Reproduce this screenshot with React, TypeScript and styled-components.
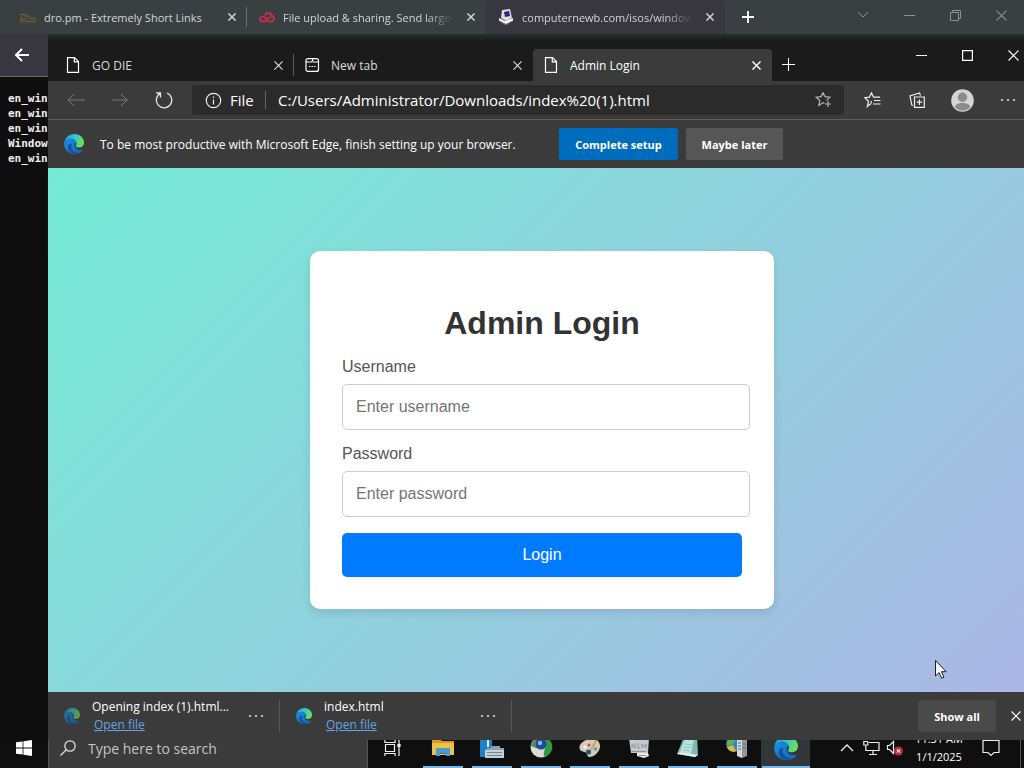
import React from "react";
import styled, { createGlobalStyle, css } from "styled-components";

const ui = `"Open Sans", "Noto Sans", sans-serif`;

const Global = createGlobalStyle`
  * { box-sizing: border-box; }
  html, body { margin: 0; background: #0d0d0d; }
  body { font-family: ${ui}; font-size: 12px; color: #fff; overflow: hidden; }
  button, input { font: inherit; color: inherit; }
  button { border: 0; background: none; padding: 0; }
  svg { display: block; flex: none; }
`;

const Desktop = styled.div`
  min-height: 100vh;
  display: flex;
  flex-direction: column;
  overflow: hidden;
`;

const OuterStrip = styled.header`
  height: 34px;
  padding-left: 8px;
  display: flex;
  background: #3a4042;
  font-size: 11px;
`;

const Title = styled.span<{ $fade?: boolean }>`
  flex: 1;
  min-width: 0;
  overflow: hidden;
  white-space: nowrap;
  ${(p) => p.$fade && css`mask-image: linear-gradient(90deg, #000 84%, transparent);`}
`;

const OuterTab = styled.div<{ $active?: boolean; $line?: boolean }>`
  width: 239px;
  padding: 0 11px 0 12px;
  display: flex;
  align-items: center;
  gap: 8px;
  color: #d3d5d6;
  background: ${(p) => (p.$active ? "#38363f" : "transparent")};
  border-radius: 6px 6px 0 0;
  ${(p) => p.$line && css`
    background: linear-gradient(#6b7072, #6b7072) right center / 1px 20px no-repeat;
  `}
  ${Title} { margin-right: 6px; }
`;

const IconButton = styled.button<{ $w: number; $h: number }>`
  width: ${(p) => p.$w}px;
  height: ${(p) => p.$h}px;
  flex: none;
  display: flex;
  align-items: center;
  justify-content: center;
`;

const Controls = styled.div<{ $dim?: boolean }>`
  margin-left: auto;
  display: flex;
  color: ${(p) => (p.$dim ? "#8d9294" : "#fff")};
`;

const Middle = styled.div`
  flex: 1;
  display: grid;
  grid-template-columns: 48px minmax(0, 1fr);
`;

const Behind = styled.aside`
  overflow: hidden;
  background: #0e0e0e;
`;

const BackBar = styled.div`
  height: 43px;
  padding-left: 10px;
  display: flex;
  align-items: center;
  background: #38363f;
  border-bottom: 1px solid #6b6a70;
`;

const Listing = styled.pre`
  margin: 14px 0 0 8px;
  font: bold 11px/15px "DejaVu Sans Mono", monospace;
  color: #eee;
`;

const Window = styled.main`
  margin-right: -12px;
  display: flex;
  flex-direction: column;
  background: #3b3b3b;
`;

const TabStrip = styled.div`
  height: 47px;
  padding-left: 7px;
  display: flex;
  align-items: flex-end;
  background: linear-gradient(#2b2e2e, #1b1b1b 7px);
  ${Controls} { align-self: flex-start; margin-top: 5px; }
`;

const EdgeTab = styled.div<{ $active?: boolean; $line?: boolean }>`
  width: 239px;
  height: 32px;
  padding: 0 11px 0 10px;
  display: flex;
  align-items: center;
  gap: 11px;
  color: ${(p) => (p.$active ? "#fff" : "#dcdcdc")};
  background: ${(p) => (p.$active ? "#3b3b3b" : "transparent")};
  border-radius: 4px 4px 0 0;
  ${(p) => p.$line && css`
    background: linear-gradient(#5a5a5a, #5a5a5a) right center / 1px 22px no-repeat;
  `}
`;

const Toolbar = styled.div`
  height: 39px;
  padding: 0 6px;
  display: flex;
  align-items: center;
  border-bottom: 1px solid #5f5f5f;
`;

const Address = styled.div`
  flex: 1;
  height: 30px;
  margin: 0 6px;
  padding: 0 12px 0 13px;
  display: flex;
  align-items: center;
  background: #2b2b2b;
  border-radius: 4px;
  font-size: 15px;
  input {
    flex: 1;
    min-width: 0;
    height: 24px;
    border: 0;
    padding: 0;
    outline: 0;
    background: none;
  }
`;

const FileTag = styled.span`
  width: 36px;
  margin: 0 12px 0 8px;
  border-right: 1px solid #666;
  line-height: 18px;
`;

const InfoBar = styled.div`
  height: 48px;
  padding-left: 16px;
  display: flex;
  align-items: center;
`;

const Message = styled.p`
  min-width: 427px;
  margin: 0 32px 0 16px;
  white-space: nowrap;
`;

const PushButton = styled.button<{ $primary?: boolean; $w: number }>`
  width: ${(p) => p.$w}px;
  height: 32px;
  margin-right: 8px;
  border-radius: 2px;
  background: ${(p) => (p.$primary ? "#006cbe" : "#565656")};
  font-size: 11px;
  font-weight: 700;
`;

const Page = styled.section`
  flex: 1;
  position: relative;
  display: flex;
  align-items: center;
  justify-content: center;
  background: linear-gradient(135deg, #74ebd5, #acb6e5);
  font-family: "Liberation Sans", Arial, sans-serif;
  font-size: 16px;
`;

const Card = styled.form`
  width: 464px;
  padding: 32px;
  background: #fff;
  border-radius: 10px;
  box-shadow: 0 4px 8px rgba(0, 0, 0, 0.1);
`;

const Heading = styled.h1`
  margin: 22px 0 15px;
  font-size: 32px;
  line-height: 37px;
  text-align: center;
  color: #333;
`;

const Field = styled.div`
  margin-bottom: 14px;
  label {
    display: block;
    margin-bottom: 8px;
    line-height: 19px;
    color: #555;
  }
  input {
    display: block;
    width: calc(100% + 8px);
    height: 46px;
    padding: 0 13px;
    border: 1px solid #ccc;
    border-radius: 5px;
    background: #fff;
    color: #333;
  }
  input::placeholder { color: #757575; }
`;

const LoginButton = styled.button`
  width: 100%;
  height: 44px;
  margin-top: 2px;
  border-radius: 5px;
  background: #007bff;
`;

const Pointer = styled.svg`
  position: absolute;
  right: 88px;
  bottom: 11px;
`;

const Downloads = styled.div`
  height: 48px;
  padding-right: 10px;
  display: flex;
  align-items: center;
  ${PushButton} { margin: 0 10px 0 auto; background: #4a4a4a; }
`;

const Download = styled.div`
  width: 232px;
  height: 32px;
  padding: 0 12px 0 16px;
  display: flex;
  align-items: center;
  gap: 12px;
  border-right: 1px solid #5b5b5b;
  div { flex: 1; line-height: 18px; white-space: nowrap; }
  a { display: block; padding-left: 2px; color: #63a5e8; }
`;

const Taskbar = styled.footer`
  height: 28px;
  overflow: hidden;
  display: flex;
  align-items: flex-end;
  background: #0f0f0f;
`;

const SearchBox = styled.label`
  width: 320px;
  height: 40px;
  padding: 0 0 0 11px;
  display: flex;
  align-items: center;
  gap: 12px;
  background: #3b3b3b;
  border: 1px solid #555;
  border-width: 0 1px;
  input {
    flex: 1;
    min-width: 0;
    border: 0;
    padding: 0;
    outline: 0;
    background: none;
    font-size: 14px;
  }
  input::placeholder { color: #c4c4c4; }
`;

const Apps = styled.div`
  display: flex;
  padding-left: 2px;
`;

const AppButton = styled(IconButton)<{ $active?: boolean }>`
  background: linear-gradient(#76b9ed, #76b9ed) center bottom / ${(p) => (p.$active ? 48 : 40)}px 2px no-repeat
    ${(p) => (p.$active ? "#333638" : "transparent")};
`;

const Tray = styled.div`
  height: 40px;
  margin-left: auto;
  padding-right: 3px;
  display: flex;
  align-items: center;
`;

const Clock = styled.time`
  width: 64px;
  text-align: center;
  font-size: 11px;
  line-height: 18px;
`;

const ShowDesktop = styled.i`
  width: 1px;
  height: 40px;
  margin-left: 9px;
  background: #555;
`;

const X = ({ s = 9, w = 1.3 }: { s?: number; w?: number }) => (
  <svg width={s} height={s} viewBox="0 0 10 10" stroke="currentColor" strokeWidth={w} fill="none">
    <path d="M.5.5l9 9M9.5.5l-9 9" />
  </svg>
);

const Plus = ({ s, w }: { s: number; w: number }) => (
  <svg width={s} height={s} viewBox="0 0 12 12" stroke="currentColor" strokeWidth={w}>
    <path d="M6 0v12M0 6h12" />
  </svg>
);

const Minus = () => (
  <svg width="11" height="11" stroke="currentColor"><path d="M0 5.5h11" /></svg>
);

const Doc = () => (
  <svg width="16" height="16" viewBox="0 0 16 16" stroke="#fff" strokeWidth="1.2" fill="none">
    <path d="M2.5.6h7l4 4v10.8h-11zM9.3.8v4h4" />
  </svg>
);

const Dots = () => (
  <svg width="16" height="4" fill="#d8d8d8">
    <circle cx="2" cy="2" r="1.1" /><circle cx="8" cy="2" r="1.1" /><circle cx="14" cy="2" r="1.1" />
  </svg>
);

const EdgeLogo = ({ s, id, dim }: { s: number; id: string; dim?: boolean }) => (
  <svg width={s} height={s} viewBox="0 0 20 20" opacity={dim ? 0.6 : 1}>
    <defs>
      <linearGradient id={id + "a"} x1="0" y1="0" x2="1" y2="0.3">
        <stop offset="0" stopColor="#1b9fe0" /><stop offset=".55" stopColor="#35c5d0" /><stop offset="1" stopColor="#66e05a" />
      </linearGradient>
      <linearGradient id={id + "b"} x1="0" y1="0" x2="1" y2="1">
        <stop offset="0" stopColor="#1a8fe6" /><stop offset="1" stopColor="#1263b8" />
      </linearGradient>
    </defs>
    <path fill={`url(#${id}a)`} d="M.3 9C1 3.700 5 0 10.200 0 16 0 20 4 20 8.600c0 3.200-2.400 5-5 5-2.200 0-3.400-.8-3.400-1.500 0-.5.900-.9.900-2.600C12.500 7 10 4.800 6.800 4.800 3.500 4.800 1.200 6.700.3 9z" />
    <path fill={`url(#${id}b)`} d="M.1 10C.1 7.200 3 4.900 6.600 4.900c3 0 5.200 1.500 5.800 3.500-1 .3-1.800 1.300-1.800 2.600 0 2.600 2 4.600 4.600 4.900 1.300.1 2.500-.1 3.300-.3.4-.2.700.1.400.5C17.100 18.900 14 20 10.600 20 4.500 20 .1 15.500.1 10z" />
    <path fill="#123f8c" opacity=".7" d="M7.800 10.200c-1.800 4 1.600 9 7.200 8.700-5.800 2.600-12.600-1.800-10.600-7.300.6-1.600 2-2.400 3.400-1.400z" />
  </svg>
);

const Start = () => (
  <svg width="16" height="16" fill="#fff">
    <path d="M0 2.300L6.600 1.400v6.200H0zM7.400 1.300L16 0v7.600H7.400zM0 8.400h6.600v6.200L0 13.700zM7.400 8.400H16V16l-8.600-1.200z" />
  </svg>
);

const Explorer = () => (
  <svg width="24" height="24">
    <path fill="#d99a1e" d="M1 3h8l2 2h12v5H1z" /><path fill="#f0c04a" d="M1 7h22v12H1z" />
    <path fill="#4b9bcb" d="M5 12h14v8h-4v-3.500H9V20H5z" /><path fill="#2f78a8" d="M9 16.500h6V18H9z" />
  </svg>
);

const ServerManager = () => (
  <svg width="26" height="26">
    <path fill="#1f7fc4" d="M1 1h12v21H1z" /><path fill="#d9ecf8" d="M8 3h2v9H8z" />
    <path fill="#8ea0ad" d="M8 13h4v-2h9v2h4v3H7z" /><path fill="#c3d0d8" d="M6 15h19v8H6z" />
    <path stroke="#74838e" d="M8 17.500h15M8 20.500h15" />
  </svg>
);

const Globe = () => (
  <svg width="24" height="24">
    <circle cx="12" cy="11" r="10.500" fill="#d9ddd2" />
    <path fill="#2f9a3b" d="M13 .5A10.500 10.500 0 0116 21c-3-2 0-6 0-11z" />
    <path fill="#5f8b69" d="M1.600 10A10.500 10.500 0 0112 .5v9l-4 3z" />
    <circle cx="12" cy="8" r="5.500" fill="#1f4a9c" /><circle cx="11" cy="7" r="2.200" fill="#8ab9ea" />
  </svg>
);

const Palette = () => (
  <svg width="24" height="24">
    <path fill="#d8cbb6" d="M13 3c5.500-.5 9.500 3 9 8-.5 5-6 10-10.500 10-2.500 0-2-3-4-4.500C5.500 15 2 16 1.500 12 1 7.500 7 3.500 13 3z" />
    <circle cx="10.500" cy="16" r="2.600" fill="#14588f" /><circle cx="7" cy="11" r="1.600" fill="#fff" />
    <circle cx="11" cy="9" r="1.500" fill="#a55" /><circle cx="17.500" cy="13" r="1.700" fill="#6b8ea0" />
    <path stroke="#c2a26b" strokeWidth="2" d="M20 1l-7 13" />
  </svg>
);

const Device = () => (
  <svg width="24" height="24">
    <path fill="#c5c9cb" d="M2 2h20l-1 15H4z" /><path fill="#eceeee" d="M10 17h11l1 3-5 2-7-2z" />
    <path stroke="#8b9296" fill="none" d="M5 12V8l3 4V7m3 0v5h2m2 0V8l2 3 2-3v4M4.500 15.500h15M12 19.500h7" />
  </svg>
);

const Notepad = () => (
  <svg width="24" height="24">
    <path fill="#7fb9b5" d="M8 1h13l1 18-3 2L1 18z" /><path fill="#b9e4dd" d="M9 3h9l-3 15-11-2z" />
    <path fill="#e5eeee" d="M1 18l18 3 3-2-18-3z" /><path stroke="#8ec4bf" d="M9 8l7 1M8 11l7 1M7 14l7 1" />
  </svg>
);

const Rack = () => (
  <svg width="24" height="24">
    <circle cx="9" cy="8" r="8" fill="#2e86c9" /><path fill="#5cb548" d="M3 3c4-3 8-2 9 0l-4 5-6 2z" />
    <path fill="#e1b93a" d="M2 11l6-2 3 6c-4 2-8-1-9-4z" />
    <path fill="#d3d7d9" d="M12 3l5-1v20l-5-2z" /><path fill="#8f979c" d="M17 2l5 2v16l-5 2z" />
    <path stroke="#5d666b" d="M13 7h3M13 10h3M13 13h3M18 8h3M18 12h3" />
  </svg>
);

export default function App() {
  return (
    <Desktop>
      <Global />
      <OuterStrip>
        <OuterTab $line>
          <svg width="16" height="16" stroke="#6d5334" strokeWidth="1.500" fill="none">
            <path d="M1 12.500h14V9.500H9V7H5V5H1.500zM1 5.500h3M2 10h5" />
          </svg>
          <Title>dro.pm - Extremely Short Links</Title>
          <X s={8} w={1.8} />
        </OuterTab>
        <OuterTab>
          <svg width="16" height="16" stroke="#c32f48" strokeWidth="2" fill="none">
            <path d="M8 11.500C6 13 1 13 1 9.800 1 7.500 3.500 6.800 5 8l4.500 4c2.500 1.500 5.500.4 5.500-2.500 0-2-1.500-3-2.500-3C12 3.500 7 3 6 6.500M8.500 9.500c1-1.500 3-1.500 3.500 0" />
          </svg>
          <Title $fade>File upload &amp; sharing. Send large</Title>
          <X s={8} w={1.8} />
        </OuterTab>
        <OuterTab $active>
          <svg width="16" height="16">
            <path fill="#ddd" d="M4 1l8-1 2 9-6 3-5-3z" /><path fill="#24238a" d="M6 3l5-1 1 5-5 1z" />
            <path fill="#f4f4f4" d="M1 9l6 3 8-3v3l-7 4-7-4z" /><path stroke="#555" fill="none" d="M1 12l7 3.500 7-3.500" />
          </svg>
          <Title $fade>computernewb.com/isos/windows</Title>
          <X s={8} w={1.8} />
        </OuterTab>
        <IconButton $w={46} $h={34} aria-label="Open a new tab"><Plus s={12} w={1.8} /></IconButton>
        <Controls $dim>
          <IconButton $w={46} $h={30} aria-label="List tabs">
            <svg width="12" height="8" stroke="currentColor" fill="none"><path d="M1 1l5 5 5-5" /></svg>
          </IconButton>
          <IconButton $w={46} $h={30} aria-label="Minimize browser"><Minus /></IconButton>
          <IconButton $w={46} $h={30} aria-label="Restore browser">
            <svg width="11" height="11" stroke="currentColor" fill="none"><path d="M.5 2.500h8v8h-8zM2.500 2.500v-2h8v8h-2" /></svg>
          </IconButton>
          <IconButton $w={46} $h={30} aria-label="Close browser"><X s={11} w={1} /></IconButton>
        </Controls>
      </OuterStrip>

      <Middle>
        <Behind>
          <BackBar>
            <IconButton $w={24} $h={24} aria-label="Go back">
              <svg width="16" height="14" stroke="#fff" strokeWidth="2" fill="none"><path d="M8 1L2 7l6 6M2 7h13" /></svg>
            </IconButton>
          </BackBar>
          <Listing>{"en_win\nen_win\nen_win\nWindow\nen_win"}</Listing>
        </Behind>

        <Window>
          <TabStrip>
            <EdgeTab $line><Doc /><Title>GO DIE</Title><X s={9} /></EdgeTab>
            <EdgeTab>
              <svg width="16" height="16" stroke="#fff" strokeWidth="1.200" fill="none">
                <rect x="2" y="1.600" width="12.500" height="12.800" rx="2" /><path d="M2 5h6l1-3M9 5h5.500M5 9.500h1.500M7.500 9.500H9M10 9.500h1.500" />
              </svg>
              <Title>New tab</Title><X s={9} />
            </EdgeTab>
            <EdgeTab $active><Doc /><Title>Admin Login</Title><X s={9} w={1.6} /></EdgeTab>
            <IconButton $w={32} $h={34} aria-label="New tab"><Plus s={13} w={1} /></IconButton>
            <Controls>
              <IconButton $w={46} $h={32} aria-label="Minimize"><Minus /></IconButton>
              <IconButton $w={46} $h={32} aria-label="Maximize">
                <svg width="11" height="11" stroke="currentColor" strokeWidth="1.200" fill="none"><path d="M.6.6h9.800v9.800H.6z" /></svg>
              </IconButton>
              <IconButton $w={46} $h={32} aria-label="Close"><X s={11} w={1.1} /></IconButton>
            </Controls>
          </TabStrip>

          <Toolbar>
            <IconButton $w={44} $h={30} aria-label="Back">
              <svg width="18" height="14" stroke="#777" fill="none"><path d="M7 1L1 7l6 6M1 7h17" /></svg>
            </IconButton>
            <IconButton $w={44} $h={30} aria-label="Forward">
              <svg width="18" height="14" stroke="#777" fill="none"><path d="M10 1l6 6-6 6M17 7H1" /></svg>
            </IconButton>
            <IconButton $w={44} $h={30} aria-label="Refresh">
              <svg width="18" height="18" stroke="#e6e6e6" strokeWidth="1.300" fill="none"><path d="M12 2a7.700 7.700 0 11-6.500.3M5.500 6.500V2H1.200" /></svg>
            </IconButton>
            <Address>
              <svg width="17" height="17" stroke="#eee" strokeWidth="1.200" fill="none">
                <circle cx="8.500" cy="8.500" r="7.200" /><path d="M8.500 7.500v5M8.500 4.500v1.500" />
              </svg>
              <FileTag>File</FileTag>
              <input aria-label="Address" defaultValue="C:/Users/Administrator/Downloads/index%20(1).html" />
              <svg width="17" height="16" stroke="#b5b5b5" strokeWidth="1.200" fill="none">
                <path d="M9.500 11.500L8 10.800 3.800 13.500l1-5-3.600-3.300 4.900-.6L8 .8l2 3.800 4.900.6-3.400 3.200M13 9v6M10 12h6" />
              </svg>
            </Address>
            <IconButton $w={45} $h={30} aria-label="Favorites">
              <svg width="17" height="16" stroke="#eee" strokeWidth="1.200" fill="none">
                <path d="M7 11.500L3.300 14.500l1.200-5.300L.8 5.700l4.600-.5L7.500.8l2 4.400h6.500M10 8.500h6.500M9 12h7.500M7 11.500L7.500 9" />
              </svg>
            </IconButton>
            <IconButton $w={45} $h={30} aria-label="Collections">
              <svg width="17" height="17" stroke="#eee" strokeWidth="1.200" fill="none">
                <path d="M5.500 5h9.800v10.400H5.500zM10.400 7.500v5.500M7.600 10.200h5.600M4 13.500l-1.200-.4L1 4l9.500-3 1 2.500" />
              </svg>
            </IconButton>
            <IconButton $w={45} $h={30} aria-label="Profile">
              <svg width="23" height="23">
                <circle cx="11.500" cy="11.500" r="11.300" fill="#d4d4d4" /><circle cx="11.500" cy="8.300" r="4.700" fill="#8b8b8b" />
                <path fill="#8b8b8b" d="M4 18.500c0-3 3-4.500 7.500-4.500s7.500 1.500 7.500 4.500c-4 4-11 4-15 0z" />
              </svg>
            </IconButton>
            <IconButton $w={45} $h={30} aria-label="Settings and more"><Dots /></IconButton>
          </Toolbar>

          <InfoBar>
            <EdgeLogo s={20} id="info" />
            <Message>To be most productive with Microsoft Edge, finish setting up your browser.</Message>
            <PushButton $primary $w={119}>Complete setup</PushButton>
            <PushButton $w={97}>Maybe later</PushButton>
          </InfoBar>

          <Page>
            <Card onSubmit={(e: React.FormEvent) => e.preventDefault()}>
              <Heading>Admin Login</Heading>
              <Field>
                <label htmlFor="username">Username</label>
                <input id="username" type="text" placeholder="Enter username" />
              </Field>
              <Field>
                <label htmlFor="password">Password</label>
                <input id="password" type="password" placeholder="Enter password" />
              </Field>
              <LoginButton type="submit">Login</LoginButton>
            </Card>
            <Pointer width="14" height="22" viewBox="0 0 14 22">
              <path fill="#fff" stroke="#1a1a2a" d="M1.500 1.500v15.500l3.600-3.400 2.500 5.600 2.300-1-2.400-5.500h4.700z" />
            </Pointer>
          </Page>

          <Downloads>
            <Download>
              <EdgeLogo s={16} id="d1" dim />
              <div>Opening index (1).html...<a href="#open-1">Open file</a></div>
              <IconButton $w={22} $h={22} aria-label="More options for index (1).html"><Dots /></IconButton>
            </Download>
            <Download>
              <EdgeLogo s={16} id="d2" />
              <div>index.html<a href="#open-2">Open file</a></div>
              <IconButton $w={22} $h={22} aria-label="More options for index.html"><Dots /></IconButton>
            </Download>
            <PushButton $w={78}>Show all</PushButton>
            <IconButton $w={20} $h={20} aria-label="Close downloads"><X s={10} w={1.1} /></IconButton>
          </Downloads>
        </Window>
      </Middle>

      <Taskbar>
        <IconButton $w={48} $h={40} aria-label="Start"><Start /></IconButton>
        <SearchBox>
          <svg width="16" height="16" stroke="#ddd" strokeWidth="1.300" fill="none"><circle cx="10" cy="6" r="5.200" /><path d="M6.300 9.700L.5 15.500" /></svg>
          <input aria-label="Search" placeholder="Type here to search" />
        </SearchBox>
        <IconButton $w={48} $h={40} aria-label="Task view">
          <svg width="17" height="18" stroke="#eee" strokeWidth="1.200" fill="none">
            <path d="M1.500 5.500h9v7h-9zM.9 1v2.500h10.200V1M.9 17v-2.500h10.200V17M15 1v16" /><path fill="#eee" d="M14 5.500h2v2h-2z" />
          </svg>
        </IconButton>
        <Apps>
          <AppButton $w={49} $h={40} aria-label="File Explorer"><Explorer /></AppButton>
          <AppButton $w={49} $h={40} aria-label="Server Manager"><ServerManager /></AppButton>
          <AppButton $w={49} $h={40} aria-label="Network"><Globe /></AppButton>
          <AppButton $w={49} $h={40} aria-label="Paint"><Palette /></AppButton>
          <AppButton $w={49} $h={40} aria-label="On-screen keyboard"><Device /></AppButton>
          <AppButton $w={49} $h={40} aria-label="Notepad"><Notepad /></AppButton>
          <AppButton $w={49} $h={40} aria-label="Services"><Rack /></AppButton>
          <AppButton $w={49} $h={40} $active aria-label="Microsoft Edge"><EdgeLogo s={24} id="task" /></AppButton>
        </Apps>
        <Tray>
          <IconButton $w={24} $h={40} aria-label="Show hidden icons">
            <svg width="14" height="8" stroke="#eee" strokeWidth="1.300" fill="none"><path d="M1 7l6-6 6 6" /></svg>
          </IconButton>
          <IconButton $w={24} $h={40} aria-label="Network status">
            <svg width="17" height="16" stroke="#eee" strokeWidth="1.200" fill="none">
              <path d="M6 2.500h10v8H4.500M.8 1.500h4v3.500h-4zM2.800 5v5.500h2M10 10.500v3.500M6 14.500h8" />
            </svg>
          </IconButton>
          <IconButton $w={24} $h={40} aria-label="Volume muted">
            <svg width="18" height="16" stroke="#eee" strokeWidth="1.200" fill="none">
              <path d="M1.500 5.500h2l4-4v12l-4-4h-2z" /><circle cx="12.500" cy="11" r="4.500" fill="#c8243a" stroke="none" />
              <path d="M10.800 9.300l3.400 3.400M14.200 9.300l-3.400 3.400" />
            </svg>
          </IconButton>
          <Clock>11:31 AM<br />1/1/2025</Clock>
          <IconButton $w={40} $h={40} aria-label="Notifications">
            <svg width="18" height="18" stroke="#eee" strokeWidth="1.200" fill="none"><path d="M1 1.500h16v12h-5l-3 3-3-3H1z" /></svg>
          </IconButton>
          <ShowDesktop />
        </Tray>
      </Taskbar>
    </Desktop>
  );
}
